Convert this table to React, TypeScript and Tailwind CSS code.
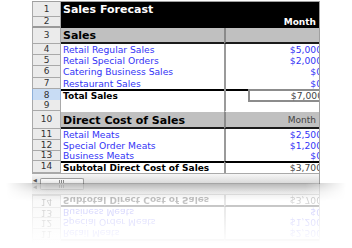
import type { ReactNode } from "react";
import { clsx, type ClassValue } from "clsx";
import { twMerge } from "tailwind-merge";

const cn = (...inputs: ClassValue[]) => twMerge(clsx(inputs));

type RowProps = {
  n: number;
  h: string;
  sel?: boolean;
  head?: string;
  bCls?: string;
  cCls?: string;
  b?: ReactNode;
  c?: ReactNode;
};

function Row({ n, h, sel, head, bCls, cCls, b, c }: RowProps) {
  return (
    <div className={cn("grid grid-cols-[29px_163px_95px]", h)}>
      <div
        className={cn(
          "flex items-center justify-center border-x border-b border-[#a9a9a9] text-[9px] text-[#333]",
          sel ? "bg-[#c8dcf4] border-[#8fb0d8]" : "bg-[#ebebeb]",
          head
        )}
      >
        {n}
      </div>
      <div className={cn("flex items-center whitespace-nowrap pl-[2px]", bCls)}>{b}</div>
      <div className={cn("flex items-center justify-end whitespace-nowrap", cCls)}>{c}</div>
    </div>
  );
}

function Num({ v, dark }: { v: string; dark?: boolean }) {
  return (
    <span className={cn("-mr-[3px] text-[9.2px]", dark ? "text-[#444]" : "text-[#3434f6]")}>
      {v}
    </span>
  );
}

function Label({ v }: { v: string }) {
  return <span className="text-[9.2px] text-[#3434f6]">{v}</span>;
}

function Sheet() {
  return (
    <div className="w-[288px] shrink-0 overflow-hidden border-t border-r border-[#a0a0a0] bg-white font-['DejaVu_Sans',Verdana,sans-serif] leading-none">
      <Row
        n={1}
        h="h-[15px]"
        bCls="bg-black"
        cCls="bg-black"
        b={<span className="text-[11px] font-bold text-white">Sales Forecast</span>}
      />
      <Row
        n={2}
        h="h-[11px]"
        head="border-b-2 border-b-[#999]"
        bCls="bg-black"
        cCls="bg-black pr-[3px]"
        c={<span className="text-[9px] font-bold text-white">Month</span>}
      />
      <Row
        n={3}
        h="h-[16px]"
        bCls="bg-[#c0c0c0] border-b-2 border-[#1a1a1a] items-end pb-[1px]"
        cCls="bg-[#c0c0c0] border-b-2 border-b-[#1a1a1a] border-l-2 border-l-[#8a8a8a]"
        b={<span className="text-[11px] font-bold text-black">Sales</span>}
      />
      <Row n={4} h="h-[11px]" cCls="border-l-2 border-[#9a9a9a]" b={<Label v="Retail Regular Sales" />} c={<Num v="$5,000" />} />
      <Row n={5} h="h-[11px]" cCls="border-l-2 border-[#9a9a9a]" b={<Label v="Retail Special Orders" />} c={<Num v="$2,000" />} />
      <Row n={6} h="h-[12px]" cCls="border-l-2 border-[#9a9a9a]" b={<Label v="Catering Business Sales" />} c={<Num v="$0" />} />
      <Row n={7} h="h-[11px]" cCls="border-l-2 border-[#9a9a9a]" b={<Label v="Restaurant Sales" />} c={<Num v="$0" />} />
      <div className="grid h-[11px] grid-cols-[29px_163px_95px]">
        <div className="flex items-center justify-center border-x border-b border-[#8fb0d8] bg-[#c8dcf4] text-[9px] text-[#333]">
          8
        </div>
        <div className="flex items-center border-t-2 border-black pl-[2px] whitespace-nowrap">
          <span className="text-[9px] font-bold text-black">Total Sales</span>
        </div>
        <div className="flex border-l-2 border-[#9a9a9a]">
          <div className="w-[22px] border-t-2 border-black" />
          <div className="-mr-[6px] flex flex-1 items-center justify-end border-2 border-[#8c8c8c] pr-[3px]">
            <Num v="$7,000" dark />
          </div>
        </div>
      </div>
      <Row n={9} h="h-[11px]" cCls="border-l-2 border-[#9a9a9a]" />
      <Row
        n={10}
        h="h-[18px]"
        bCls="bg-[#c0c0c0] border-t border-t-white border-b-2 border-b-[#1a1a1a] items-end pb-[1px]"
        cCls="bg-[#c0c0c0] border-t border-t-white border-b-2 border-b-[#1a1a1a] border-l-2 border-l-[#8a8a8a] items-end pb-[2px] pr-[3px]"
        b={<span className="text-[11px] font-bold text-black">Direct Cost of Sales</span>}
        c={<span className="text-[9px] text-[#444]">Month</span>}
      />
      <Row n={11} h="h-[11px]" cCls="border-l-2 border-[#9a9a9a]" b={<Label v="Retail Meats" />} c={<Num v="$2,500" />} />
      <Row n={12} h="h-[11px]" cCls="border-l-2 border-[#9a9a9a]" b={<Label v="Special Order Meats" />} c={<Num v="$1,200" />} />
      <Row n={13} h="h-[10px]" cCls="border-l-2 border-[#9a9a9a]" b={<Label v="Business Meats" />} c={<Num v="$0" />} />
      <Row
        n={14}
        h="h-[12px]"
        bCls="border-t-2 border-black"
        cCls="border-t-2 border-t-black border-l-2 border-l-[#9a9a9a]"
        b={<span className="text-[9px] font-bold text-black">Subtotal Direct Cost of Sales</span>}
        c={<Num v="$3,700" dark />}
      />
      <div className="flex h-[11px] items-end border-t border-[#a9a9a9] bg-linear-to-b from-[#f6f6f6] to-[#d8d8d8]">
        <span className="mb-[1px] ml-[1px] text-[5px] text-[#555]">◀</span>
        <div className="ml-[3px] flex h-[6px] w-[44px] items-center justify-center rounded-t-[2px] border border-b-0 border-[#9c9c9c] bg-linear-to-b from-[#fafafa] to-[#e2e2e2]">
          <div className="flex gap-[1px]">
            <div className="h-[3px] w-px bg-[#888]" />
            <div className="h-[3px] w-px bg-[#888]" />
            <div className="h-[3px] w-px bg-[#888]" />
          </div>
        </div>
      </div>
    </div>
  );
}

export default function App() {
  return (
    <div className="relative h-[248px] w-[352px] overflow-hidden bg-white">
      <div className="flex flex-col pl-[32px] pt-[1px]">
        <Sheet />
        <div className="relative h-[60px] shrink-0">
          <div className="h-full -scale-y-100 overflow-hidden opacity-30">
            <div className="flex h-full flex-col justify-end">
              <Sheet />
            </div>
          </div>
          <div className="absolute inset-0 bg-linear-to-b from-white/0 via-white/40 to-white" />
        </div>
      </div>
      <div className="absolute left-[6px] top-[183px] h-[18px] w-[340px] bg-linear-to-b from-black/25 via-black/8 to-transparent [mask-image:linear-gradient(to_right,transparent,black_12%,black_88%,transparent)]" />
    </div>
  );
}
